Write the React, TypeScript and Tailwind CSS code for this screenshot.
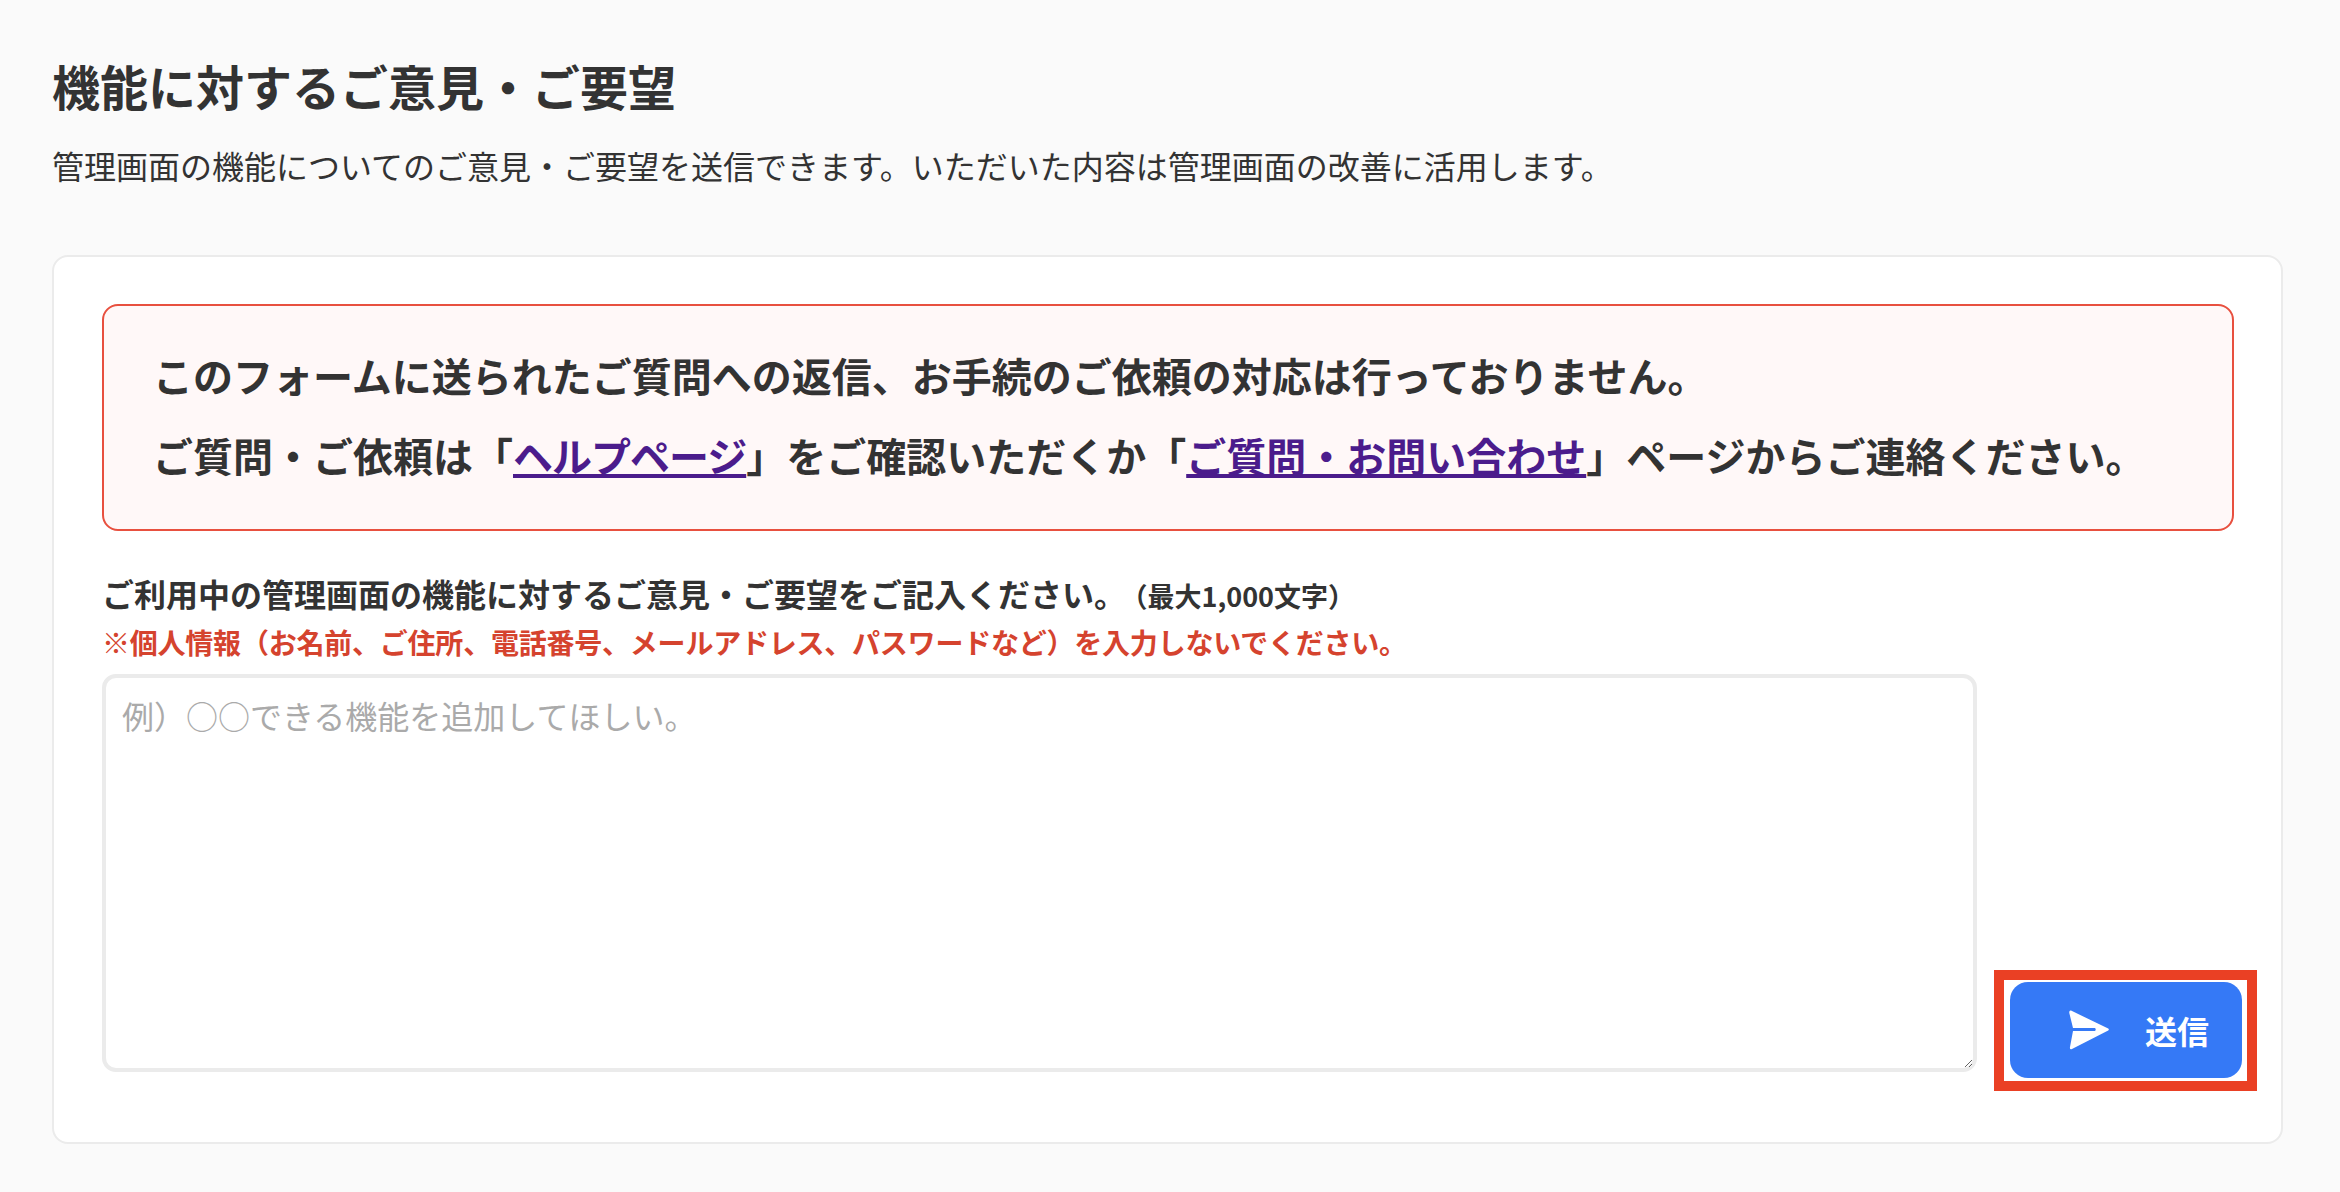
import { SVGProps } from "react"

const font = "font-['Noto_Sans_CJK_JP','Noto_Sans',sans-serif]"

function SendIcon(props: SVGProps<SVGSVGElement>) {
  return (
    <svg viewBox="0 0 40 40" fill="none" {...props}>
      <path
        d="M2 0.5 L39.2 18.6 Q40.5 19.5 39.2 20.4 L3 39 Q0.5 40 1 37 L4 21 L26 21 Q27.5 19.5 26 18 L4 18 L0.3 3 Q0 0 2 0.5 Z"
        fill="#fff"
      />
    </svg>
  )
}

export default function App() {
  return (
    <div className={`${font} min-h-[1192px] bg-[#fafafa] pb-[46px] pl-[52px] pr-[57px] pt-[55px] text-[#333]`}>
      <h1 className="text-[48px] font-bold leading-[60px]">機能に対するご意見・ご要望</h1>
      <p className="mt-[28px] text-[32px] leading-[44px]">
        管理画面の機能についてのご意見・ご要望を送信できます。いただいた内容は管理画面の改善に活用します。
      </p>

      <div className="mt-[68px] h-[889px] w-[2231px] rounded-[16px] border-2 border-[#ebebeb] bg-white pl-[48px] pt-[47px]">
        <div className="w-[2132px] rounded-[16px] border-2 border-[#e8503f] bg-[#fff8f8] pb-[34px] pl-[49px] pt-[29px] text-[40px] font-bold leading-[80px]">
          <p>このフォームに送られたご質問への返信、お手続のご依頼の対応は行っておりません。</p>
          <p>
            ご質問・ご依頼は「<a className="tracking-[-1px] text-[#4b1c8c] underline" href="#">ヘルプページ</a>」をご確認いただくか「
            <a className="text-[#4b1c8c] underline" href="#">ご質問・お問い合わせ</a>」ページからご連絡ください。
          </p>
        </div>

        <p className="mt-[39px] text-[32px] font-bold leading-[46px]">
          ご利用中の管理画面の機能に対するご意見・ご要望をご記入ください。
          <span className="ml-[8px] text-[27px]">（最大1,000文字）</span>
        </p>
        <p className="text-[28px] font-bold leading-[46px] tracking-[-0.22px] text-[#d5432e]">
          ※個人情報（お名前、ご住所、電話番号、メールアドレス、パスワードなど）を入力しないでください。
        </p>

        <div className="mt-[9px] flex">
          <textarea
            className="h-[398px] w-[1875px] shrink-0 rounded-[14px] border-4 border-[#ebebeb] bg-white px-[16px] py-[13px] text-[32px] leading-[48px] outline-none placeholder:text-[#aaa]"
            placeholder="例）○○できる機能を追加してほしい。"
          />
          <div className="-mb-[19px] ml-[17px] shrink-0 self-end border-[10px] border-[#ea4024] bg-white pb-[3px] pl-[6px] pr-[5px] pt-[2px]">
            <button className="flex h-[96px] w-[232px] items-center rounded-[18px] bg-[#3579f6] pl-[59px] text-[32px] font-bold text-white">
              <SendIcon className="h-[40px] w-[40px]" />
              <span className="ml-[36px]">送信</span>
            </button>
          </div>
        </div>
      </div>
    </div>
  )
}
